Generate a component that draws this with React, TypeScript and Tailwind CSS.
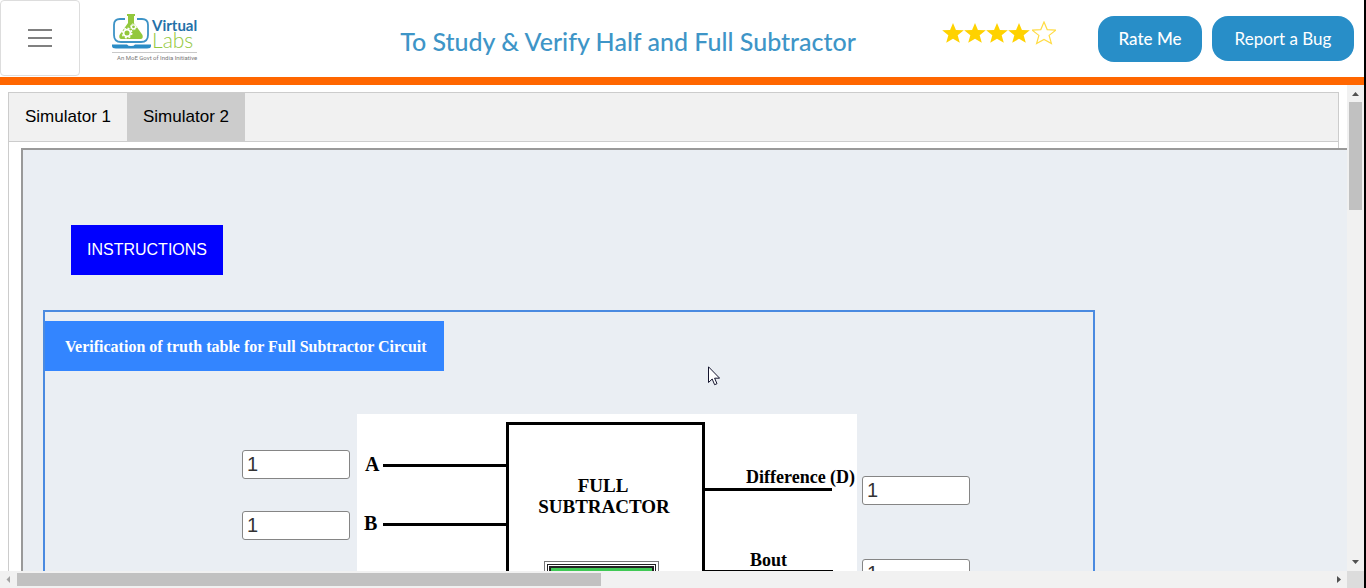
import React from "react";

const STAR = "M12 1l3.200 7.600 8.600.5-6.700 5.300 2.300 8.200L12 18.400l-7.400 4.200 2.300-8.200L.2 9.100l8.600-.5z";

function Logo() {
  return (
    <svg width="88" height="50" viewBox="0 0 88 50" role="img" aria-label="Virtual Labs">
      <path
        d="M13 5H8Q2 5 2 11v10q0 7 7 7h20q7 0 7-7V11q0-6-6-6h-5"
        fill="none"
        stroke="#3d93c6"
        strokeWidth="1.800"
      />
      <path d="M0 30.500h15q1 1.500 4 1.500t4-1.500h16v1.500q0 2.500-4 2.500H4Q0 34.500 0 32z" fill="#2b8cc6" />
      <path d="M15 0h8v2h-1v7l8.500 12q1 4-2 4h-19q-3 0-2-4L16 9V2h-1z" fill="#93c83d" />
      <circle cx="15" cy="19" r="3.400" fill="none" stroke="#fff" strokeWidth="1.800" />
      <circle cx="15" cy="19" r="4.800" fill="none" stroke="#fff" strokeWidth="1.400" strokeDasharray="2 1.770" />
      <circle cx="21.500" cy="12.800" r="2" fill="none" stroke="#fff" strokeWidth="1.200" />
      <circle cx="21.500" cy="12.800" r="3" fill="none" stroke="#fff" strokeWidth="1" strokeDasharray="1.300 1.050" />
      <text x="40" y="17" fontFamily="Lato, sans-serif" fontWeight="700" fontSize="15" fill="#2471a8">
        Virtual
      </text>
      <text x="40" y="34" fontFamily="Lato, sans-serif" fontWeight="300" fontSize="21" fill="#93c83d">
        Labs
      </text>
      <path d="M0 38.500h85" stroke="#c9c9c9" />
      <text x="5" y="46" fontFamily="Roboto, sans-serif" fontSize="6" fill="#777">
        An MoE Govt of India Initiative
      </text>
    </svg>
  );
}

function Stars() {
  return (
    <div className="flex items-center" role="img" aria-label="4 out of 5 stars">
      {[0, 1, 2, 3].map((n) => (
        <svg key={n} width="22" height="22" viewBox="0 0 24 24">
          <path d={STAR} fill="#ffd200" />
        </svg>
      ))}
      <svg className="ml-0.5" width="24" height="24" viewBox="0 0 24 24">
        <path d={STAR} fill="#fff" stroke="#ffdc45" strokeWidth="1.200" />
      </svg>
    </div>
  );
}

function Header() {
  return (
    <header className="flex h-[85px] shrink-0 items-start border-b-8 border-[#ff6600] bg-white">
      <button
        type="button"
        aria-label="Menu"
        className="flex h-[76px] w-20 shrink-0 flex-col items-center justify-center gap-1.5 rounded border border-[#dddddd]"
      >
        <span className="h-0.5 w-6 bg-[#808080]" />
        <span className="h-0.5 w-6 bg-[#808080]" />
        <span className="h-0.5 w-6 bg-[#808080]" />
      </button>
      <a href="#" className="ml-8 mt-3.5 shrink-0">
        <Logo />
      </a>
      <h1 className="mt-[23px] flex-1 pr-8 pl-[168px] text-center font-[Lato,sans-serif] text-[25px] leading-9 font-medium whitespace-nowrap text-[#3e95c7]">
        To Study &amp; Verify Half and Full Subtractor
      </h1>
      <div className="mt-[21px] ml-[22px] shrink-0">
        <Stars />
      </div>
      <div className="mt-4 mr-2.5 ml-[42px] flex shrink-0 gap-2.5 font-[Lato,sans-serif] text-[17px] text-white">
        <button type="button" className="h-[46px] w-[104px] rounded-2xl bg-[#288ec8] font-medium">
          Rate Me
        </button>
        <button type="button" className="h-[45px] w-[142px] rounded-2xl bg-[#288ec8]">
          Report a Bug
        </button>
      </div>
    </header>
  );
}

function Diagram() {
  return (
    <svg width="500" height="240" viewBox="0 0 500 240" className="shrink-0 bg-white">
      <g fill="none" stroke="#000" strokeWidth="3">
        <path d="M150.500 240V9.500h196V240" />
        <path d="M26 51.500h124M26 110.500h124M347 75.500h128M347 157.500h129" />
      </g>
      <g fontFamily="Liberation Serif, serif" fontWeight="700" fill="#000">
        <text x="8" y="57" fontSize="20">A</text>
        <text x="7" y="116" fontSize="20">B</text>
        <text x="246" y="78" fontSize="19" textAnchor="middle">FULL</text>
        <text x="247" y="99" fontSize="19" textAnchor="middle">SUBTRACTOR</text>
        <text x="389" y="69" fontSize="18">Difference (D)</text>
        <text x="393" y="152" fontSize="18">Bout</text>
      </g>
      <rect x="187.500" y="147.500" width="114" height="60" fill="#fff" stroke="#777" />
      <rect x="190.500" y="150.500" width="108" height="54" fill="#fff" stroke="#222" />
      <rect x="193" y="153" width="103" height="49" fill="#40c955" stroke="#222" strokeWidth="2" />
    </svg>
  );
}

function Bit({ label }: { label: string }) {
  return (
    <input
      type="text"
      aria-label={label}
      defaultValue="1"
      className="h-[29px] w-[108px] rounded-[3px] border border-[#858585] bg-white px-1 text-xl leading-6 text-[#333333]"
    />
  );
}

function Workspace() {
  return (
    <div className="w-[150%] border-2 border-[#999999] bg-[#eaeef3] pt-[75px] pl-5">
      <button type="button" className="ml-7 h-[50px] bg-[#0000ff] px-4 text-base text-white">
        INSTRUCTIONS
      </button>
      <section className="mt-[35px] w-[1052px] border-2 border-[#4a8ae0] pt-[9px]">
        <h2 className="h-[50px] w-[399px] bg-[#3385ff] px-5 font-['Liberation_Serif',serif] text-base leading-[52px] font-bold whitespace-nowrap text-white">
          Verification of truth table for Full Subtractor Circuit
        </h2>
        <div className="mt-[43px] flex pl-[197px]">
          <div className="flex flex-col gap-8 pt-9 pr-[7px]">
            <Bit label="A" />
            <Bit label="B" />
          </div>
          <Diagram />
          <div className="flex flex-col gap-[54px] pt-[62px] pl-[5px]">
            <Bit label="Difference (D)" />
            <Bit label="Bout" />
          </div>
        </div>
      </section>
    </div>
  );
}

function VerticalScrollbar() {
  return (
    <div className="flex w-[17px] shrink-0 flex-col items-center bg-[#f1f1f1]">
      <svg width="17" height="17" viewBox="0 0 17 17" className="shrink-0">
        <path d="M5 11h7L8.500 7z" fill="#505050" />
      </svg>
      <div className="min-h-0 w-full flex-1 px-0.5">
        <div className="h-[24%] bg-[#c1c1c1]" />
      </div>
      <svg width="17" height="17" viewBox="0 0 17 17" className="shrink-0">
        <path d="M5 6h7l-3.500 4z" fill="#505050" />
      </svg>
    </div>
  );
}

function HorizontalScrollbar() {
  return (
    <div className="flex h-[17px] shrink-0 items-center bg-[#f1f1f1]">
      <svg width="17" height="17" viewBox="0 0 17 17" className="shrink-0">
        <path d="M10 5v7L6.500 8.500z" fill="#a3a3a3" />
      </svg>
      <div className="h-full flex-1 py-0.5">
        <div className="h-full w-[44.500%] bg-[#c1c1c1]" />
      </div>
      <svg width="17" height="17" viewBox="0 0 17 17" className="shrink-0">
        <path d="M7 5v7l4-3.500z" fill="#505050" />
      </svg>
      <div className="size-[17px] shrink-0 bg-[#dcdcdc]" />
    </div>
  );
}

export default function App() {
  return (
    <div className="relative flex h-screen flex-col overflow-hidden border-r-2 border-black bg-white font-['Liberation_Sans',sans-serif] text-black">
      <Header />
      <div className="flex min-h-0 flex-1">
        <main className="min-w-0 flex-1 overflow-hidden pt-[7px] pr-2 pl-2">
          <nav className="flex h-[50px] border border-[#cccccc] bg-[#f1f1f1] text-[17px]">
            <button type="button" className="px-4">
              Simulator 1
            </button>
            <button type="button" className="bg-[#cccccc] px-4">
              Simulator 2
            </button>
          </nav>
          <div className="border-x border-[#cccccc] px-3 pt-1.5">
            <Workspace />
          </div>
        </main>
        <VerticalScrollbar />
      </div>
      <HorizontalScrollbar />
      <svg className="pointer-events-none absolute top-[366px] left-[708px]" width="12" height="20" viewBox="0 0 12 20">
        <path
          d="M.5.8v15.700l3.700-3.500 2.400 5.700 2.400-1-2.400-5.500h5z"
          fill="#fff"
          stroke="#15152e"
          strokeWidth="1"
        />
      </svg>
    </div>
  );
}
